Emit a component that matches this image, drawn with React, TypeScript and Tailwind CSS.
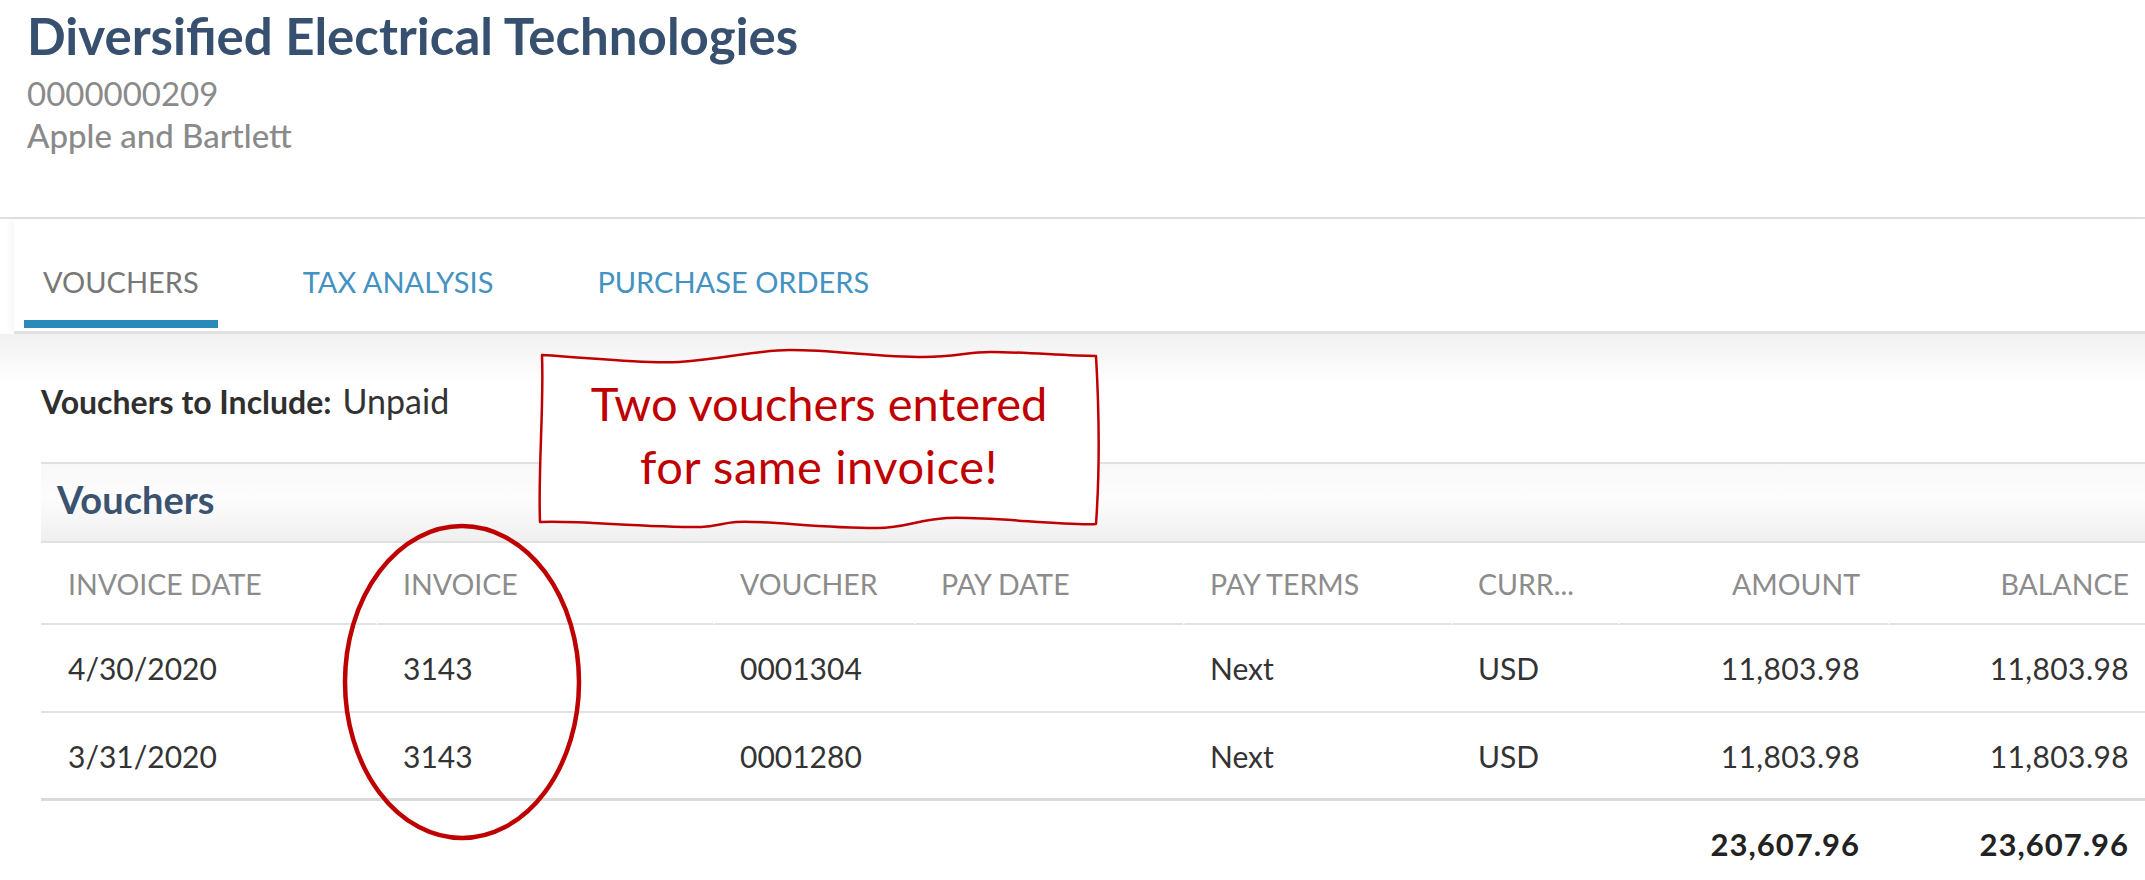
import React from "react";

const cols = "grid grid-cols-[335px_337px_201px_269px_268px_167px_270px_269px]";

const headers: { label: string; right?: boolean }[] = [
  { label: "INVOICE DATE" },
  { label: "INVOICE" },
  { label: "VOUCHER" },
  { label: "PAY DATE" },
  { label: "PAY TERMS" },
  { label: "CURR..." },
  { label: "AMOUNT", right: true },
  { label: "BALANCE", right: true },
];

const rows = [
  ["4/30/2020", "3143", "0001304", "", "Next", "USD", "11,803.98", "11,803.98"],
  ["3/31/2020", "3143", "0001280", "", "Next", "USD", "11,803.98", "11,803.98"],
];

function Callout() {
  return (
    <div className="absolute left-[536px] top-[348px] w-[566px] h-[184px]">
      <svg className="absolute inset-0" width="566" height="184" viewBox="0 0 566 184">
        <path
          d="M 6 7 C 60 10, 100 16, 143 14 C 190 11, 220 2, 254 2 C 300 2, 340 9, 388 9 C 420 9, 430 4, 455 4 C 490 4, 530 8, 560 8 C 563 60, 564 120, 560 176 C 530 178, 450 168, 411 170 C 380 172, 370 180, 341 180 C 280 180, 230 172, 200 174 C 185 175, 180 179, 165 179 C 100 179, 40 172, 4 174 C 2 120, 8 60, 6 7 Z"
          fill="#ffffff"
          stroke="#c00000"
          strokeWidth="2.5"
          strokeLinejoin="round"
        />
      </svg>
      <div className="relative pt-[24px] text-center text-[47px] leading-[63px] text-[#c00000]">
        <div>Two vouchers entered</div>
        <div className="tracking-[0.6px]">for same invoice!</div>
      </div>
    </div>
  );
}

function Ellipse() {
  return (
    <svg
      className="absolute left-[340px] top-[521px]"
      width="245"
      height="323"
      viewBox="0 0 245 323"
    >
      <ellipse cx="122" cy="161" rx="117" ry="156" fill="none" stroke="#bf0000" strokeWidth="4.5" />
    </svg>
  );
}

export default function App() {
  return (
    <div className="relative w-[2145px] h-[880px] overflow-hidden bg-white text-[#333333] font-['Lato',sans-serif]">
      {/* Header */}
      <div className="h-[217px] pl-[27px] pt-[5px]">
        <div className="text-[51px] leading-[61px] font-bold text-[#37506f]">
          Diversified Electrical Technologies
        </div>
        <div className="mt-[6px] text-[33px] leading-[42px] text-[#8a8a8a]">0000000209</div>
        <div className="text-[33px] leading-[42px] font-medium text-[#8a8a8a]">Apple and Bartlett</div>
      </div>
      <div className="h-[2px] bg-[#e0e0e0]" />

      {/* Tabs */}
      <div className="ml-[14px] h-[115px] flex items-end gap-[66px] pl-[10px] border-b-[3px] border-[#e0e0e0] shadow-[-4px_0_6px_rgba(0,0,0,0.03)]">
        {[
          { label: "VOUCHERS", active: true },
          { label: "TAX ANALYSIS" },
          { label: "PURCHASE ORDERS" },
        ].map((t) => (
          <div key={t.label} className="flex flex-col items-stretch pb-[3px]">
            <div
              className={
                "px-[19px] text-center text-[29px] leading-[36px] " +
                (t.active ? "text-[#777777]" : "text-[#4392c2]")
              }
            >
              {t.label}
            </div>
            <div className={"mt-[20px] h-[8px] " + (t.active ? "bg-[#2b8bb8]" : "bg-transparent")} />
          </div>
        ))}
      </div>

      {/* Filter line */}
      <div className="h-[128px] pl-[41px] pt-[48px] bg-[linear-gradient(to_bottom,#f1f1f1,#ffffff_50px)] leading-[38px] flex items-baseline">
        <span className="text-[32px] font-bold text-[#2f2f2f]">Vouchers to Include:</span>
        <span className="ml-[11px] text-[34px] text-[#333333]">Unpaid</span>
      </div>

      {/* Panel */}
      <div className="ml-[41px] w-[2116px]">
        <div className="h-[81px] border-t-2 border-b-2 border-[#e0e0e0] bg-[linear-gradient(to_bottom,#f8f8f8,#fdfdfd_45%,#efefef)] pl-[16px] pt-[12px]">
          <div className="text-[38px] leading-[46px] font-bold text-[#3b5370]">Vouchers</div>
        </div>

        <div className={cols}>
          {headers.map((h, i) => (
            <div
              key={h.label}
              className={
                "h-[82px] pt-[23px] border-b-2 border-b-[#e2e2e2] text-[28.5px] leading-[36px] text-[#8c8c8c] whitespace-nowrap " +
                (i > 0 ? "border-l-2 border-l-white " : "") +
                (h.right ? "text-right pr-[28px] " : i > 0 ? "pl-[25px] " : "pl-[27px] ")
              }
            >
              {h.label}
            </div>
          ))}
        </div>

        {rows.map((r, ri) => (
          <div
            key={ri}
            className={
              cols +
              " h-[88px] " +
              (ri === rows.length - 1 ? "border-b-[3px] border-[#dadada]" : "border-b-2 border-[#e2e2e2]")
            }
          >
            {r.map((c, ci) => (
              <div
                key={ci}
                className={
                  "pt-[25px] text-[30px] leading-[36px] text-[#333333] whitespace-nowrap " +
                  (ci >= 6 ? "text-right pr-[28px] tracking-[0.4px]" : "pl-[27px]")
                }
              >
                {c}
              </div>
            ))}
          </div>
        ))}

        <div className={cols + " h-[80px]"}>
          {["", "", "", "", "", "", "23,607.96", "23,607.96"].map((c, ci) => (
            <div
              key={ci}
              className={
                "pt-[25px] text-[31px] leading-[36px] font-bold text-[#222222] whitespace-nowrap " +
                (ci >= 6 ? "text-right pr-[28px] tracking-[1px]" : "pl-[27px]")
              }
            >
              {c}
            </div>
          ))}
        </div>
      </div>

      <Ellipse />
      <Callout />
    </div>
  );
}
